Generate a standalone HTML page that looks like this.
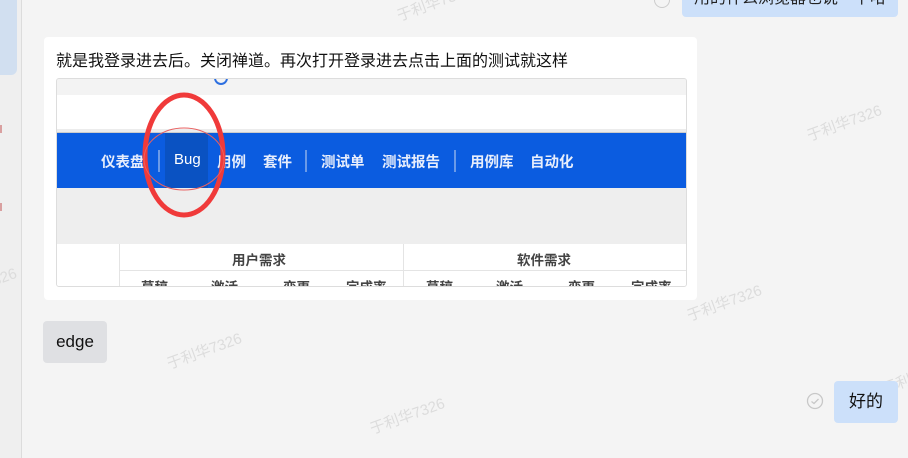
<!DOCTYPE html>
<html><head><meta charset="utf-8"><style>
*{margin:0;padding:0;box-sizing:border-box}
body{width:908px;height:458px;overflow:hidden;background:#f4f4f4;font-family:"Liberation Sans","Noto Sans CJK SC",sans-serif;position:relative}
.abs{position:absolute}
.wm{position:absolute;color:#dcdcdc;font-size:15px;transform:rotate(-20deg);white-space:nowrap}
.nav span{position:absolute;top:18px;color:#e8eefc;font-size:14.5px;font-weight:bold}
.sep{position:absolute;top:17px;width:2px;height:22px;background:#6b9ae8}
.th{position:absolute;font-size:13.5px;color:#444;font-weight:bold}
</style></head><body>
<div class="abs" style="left:0;top:0;width:22px;height:458px;background:#efefef;border-right:1px solid #dcdcdc"></div>
<div class="abs" style="left:0;top:0;width:17px;height:75px;background:#d1dff0;border-radius:0 0 6px 0"></div>
<div class="abs" style="left:0;top:125px;width:2px;height:8px;background:#d9a0a0"></div>
<div class="abs" style="left:0;top:203px;width:2px;height:8px;background:#d9a0a0"></div>

<div class="wm" style="left:395px;top:-8px">于利华7326</div>
<div class="wm" style="left:805px;top:112px">于利华7326</div>
<div class="wm" style="left:685px;top:292px">于利华7326</div>
<div class="wm" style="left:165px;top:340px">于利华7326</div>
<div class="wm" style="left:368px;top:405px">于利华7326</div>
<div class="wm" style="left:-60px;top:275px">于利华7326</div>
<div class="wm" style="left:880px;top:365px">于利华7326</div>

<div class="abs" style="left:682px;top:-8px;width:216px;height:25px;background:#cce0fa;border-radius:4px;font-size:16px;padding:0 0 0 12px;line-height:14px;color:#222;overflow:hidden;white-space:nowrap">用的什么浏览器也说一下哈</div>
<div class="abs" style="left:654px;top:-8px;width:16px;height:16px;border:1.5px solid #ccc;border-radius:50%"></div>

<div class="abs" style="left:44px;top:37px;width:653px;height:263px;background:#fff;border-radius:4px"></div>
<div class="abs" style="left:56px;top:47px;font-size:16px;color:#111;white-space:nowrap">就是我登录进去后。关闭禅道。再次打开登录进去点击上面的测试就这样</div>

<div class="abs" style="left:56px;top:78px;width:631px;height:209px;border:1px solid #ddd;border-radius:3px;overflow:hidden;background:#eeeeee">
  <div class="abs" style="left:0;top:0;width:631px;height:16px;background:#f3f3f3"></div>
  <div class="abs" style="left:157px;top:-8px;width:14px;height:14px;border:2.5px solid #2d6fe0;border-radius:50%"></div>
  <div class="abs" style="left:0;top:16px;width:631px;height:34px;background:#fff"></div>
  <div class="abs" style="left:0;top:50px;width:631px;height:4px;background:#ececec;border-bottom:1px solid #ccc"></div>
  <div class="abs nav" style="left:0;top:54px;width:631px;height:55px;background:#0b5ce0">
    <div class="abs" style="left:108px;top:0;width:43px;height:55px;background:#0a52c2"></div>
    <span style="left:44px">仪表盘</span>
    <div class="sep" style="left:101px"></div>
    <span style="left:117px;font-weight:normal;color:#fff;font-size:15px">Bug</span>
    <span style="left:160px">用例</span>
    <span style="left:206px">套件</span>
    <div class="sep" style="left:248px"></div>
    <span style="left:264px">测试单</span>
    <span style="left:325px">测试报告</span>
    <div class="sep" style="left:397px"></div>
    <span style="left:413px">用例库</span>
    <span style="left:473px">自动化</span>
  </div>
  <div class="abs" style="left:0;top:165px;width:631px;height:50px;background:#fff"></div>
  <div class="abs" style="left:62px;top:165px;width:1px;height:50px;background:#e4e4e4"></div>
  <div class="abs" style="left:346px;top:165px;width:1px;height:50px;background:#e4e4e4"></div>
  <div class="abs" style="left:62px;top:191px;width:569px;height:1px;background:#e4e4e4"></div>
  <div class="th" style="left:175px;top:170px">用户需求</div>
  <div class="th" style="left:460px;top:170px">软件需求</div>
  <div class="th" style="left:84px;top:197px">草稿</div>
  <div class="th" style="left:154px;top:197px">激活</div>
  <div class="th" style="left:226px;top:197px">变更</div>
  <div class="th" style="left:289px;top:197px">完成率</div>
  <div class="th" style="left:369px;top:197px">草稿</div>
  <div class="th" style="left:439px;top:197px">激活</div>
  <div class="th" style="left:511px;top:197px">变更</div>
  <div class="th" style="left:574px;top:197px">完成率</div>
</div>
<svg class="abs" style="left:0;top:0" width="908" height="458">
  <ellipse cx="184" cy="155" rx="39" ry="60" fill="none" stroke="#f03a3a" stroke-width="5"/>
  <ellipse cx="184" cy="159" rx="40" ry="31" fill="none" stroke="#e86060" stroke-width="1"/>
</svg>

<div class="abs" style="left:43px;top:321px;width:64px;height:42px;background:#dfe0e3;border-radius:4px;font-size:17px;line-height:42px;text-align:center;color:#111">edge</div>

<div class="abs" style="left:834px;top:381px;width:64px;height:42px;background:#cce0fa;border-radius:4px;font-size:17px;line-height:42px;text-align:center;color:#111">好的</div>
<svg class="abs" style="left:806px;top:392px" width="18" height="18"><circle cx="9" cy="9" r="7.5" fill="none" stroke="#c8c8c8" stroke-width="1.3"/><path d="M5.5 9.5 L8 11.5 L12.5 7" fill="none" stroke="#c8c8c8" stroke-width="1.3"/></svg>
</body></html>
